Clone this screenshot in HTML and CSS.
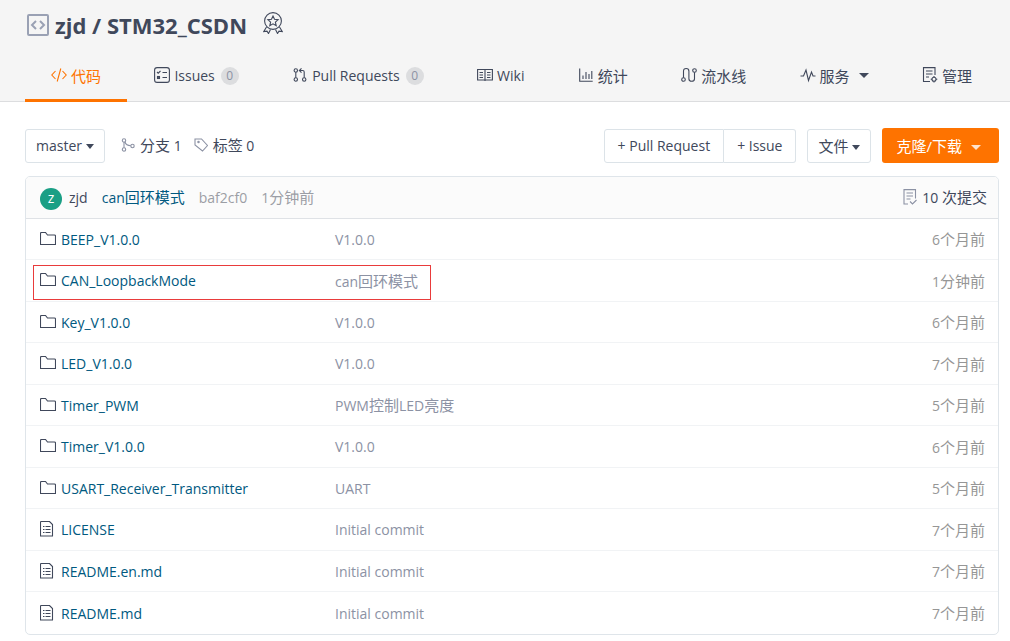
FILE: index.html
```html
<!DOCTYPE html>
<html lang="zh-CN">
<head>
<meta charset="utf-8">
<title>zjd/STM32_CSDN</title>
<link rel="stylesheet" href="styles.css">
</head>
<body>
<svg class="defs" aria-hidden="true">
  <symbol id="folder" viewBox="0 0 16 14"><path d="M.5 12.5V1.5q0-1 1-1H5.500l2 2.500H14.500q1 0 1 1v8.500z"/></symbol>
  <symbol id="file" viewBox="0 0 14 16"><path d="M1 .5h8.500L12.500 3.500v11.500h-12V1zM5.500 5.500h5M5.500 8.500h5M5.500 11.500h5M3 5.500h1.500M3 8.500h1.500M3 11.500h1.500"/></symbol>
</svg>
<header class="header">
  <div class="title-row">
    <svg class="icon repo-icon" viewBox="0 0 22 22"><rect x="1" y="1" width="20" height="20" rx="1"/><path d="M9 7l-4 4 4 4M13 7l4 4-4 4"/></svg>
    <h1 class="title"><a href="#">zjd</a> / <a href="#">STM32_CSDN</a></h1>
    <svg class="icon medal" viewBox="0 0 20 22"><circle cx="10" cy="9" r="8.400"/><path d="M10 4l1.500 3.300 3.600.4-2.700 2.400.8 3.600-3.200-1.900-3.200 1.900.8-3.600L4.900 7.700l3.600-.4zM3.500 15L.8 19.500l3.200-.4 1.500 2.400 2-4M16.500 15l2.700 4.500-3.200-.4-1.500 2.400-2-4"/></svg>
  </div>
  <nav class="tabs">
    <a class="tab active" href="#"><svg class="icon" viewBox="0 0 16 16"><path d="M4.500 4L.8 8l3.700 4M11.500 4l3.700 4-3.700 4M9.800 1.500l-3.600 13"/></svg><span class="cjk">代码</span></a>
    <a class="tab" href="#"><svg class="icon" viewBox="0 0 16 16"><rect x=".6" y=".6" width="14.800" height="14.800" rx="2.500"/><path d="M3 5l1.200 1.200L6.500 4M8.500 5.500h4.500M8.500 10.500h4.500"/><rect x="3.500" y="9.500" width="2" height="2"/></svg>Issues<span class="count">0</span></a>
    <a class="tab" href="#"><svg class="icon" viewBox="0 0 14 16"><circle cx="2.800" cy="3.500" r="1.700"/><circle cx="2.800" cy="12.500" r="1.700"/><circle cx="11.200" cy="12.500" r="1.700"/><path d="M2.800 5.200v5.600M6.500 3.500h3.200q1.500 0 1.500 1.500v5.800M8.500 1.300L6.300 3.500l2.200 2.200"/></svg>Pull Requests<span class="count">0</span></a>
    <a class="tab" href="#"><svg class="icon" viewBox="0 0 16 16"><path d="M.6 2.500h14.800v10.500H.6zM8 2.500V14M2.500 5.500H6M2.500 8H6M2.500 10.500H6M10 5.500h3.500M10 8h3.500M10 10.500h3.500"/></svg>Wiki</a>
    <a class="tab" href="#"><svg class="icon" viewBox="0 0 14 16"><path d="M.7 1.500v12.800h13M4 12V8.500M7 12V5M10 12V7M12.800 12V4"/></svg><span class="cjk">统计</span></a>
    <a class="tab" href="#"><svg class="icon" viewBox="0 0 16 16"><circle cx="2.500" cy="12.500" r="1.800"/><circle cx="13.500" cy="3.500" r="1.800"/><path d="M2.500 10.700V4.200q0-2.700 2.700-2.700t2.700 2.700v7.500q0 2.600 2.800 2.600t2.800-2.600V5.300"/></svg><span class="cjk">流水线</span></a>
    <a class="tab" href="#"><svg class="icon" viewBox="0 0 16 16"><path d="M.5 9h3L6 3l2.500 10.500L11.500 5l1.500 4h2.500"/></svg><span class="cjk">服务</span><i class="caret wide"></i></a>
    <a class="tab" href="#"><svg class="icon" viewBox="0 0 15 16"><path d="M7.500 14.500H1V.6h11.500V8M3.500 4H10M3.500 7H10M3.500 10h3"/><circle cx="11.500" cy="12.300" r="2"/><path d="M11.500 9v1.300M11.500 14.300v1.300M8.200 12.300h1.300M13.500 12.300h1.300"/></svg><span class="cjk">管理</span></a>
  </nav>
</header>
<main class="content">
  <div class="toolbar">
    <button class="btn">master<i class="caret"></i></button>
    <a class="stat branch" href="#"><svg class="icon muted" viewBox="0 0 14 16"><circle cx="3" cy="3.500" r="1.700"/><circle cx="3" cy="12.500" r="1.700"/><circle cx="11.500" cy="9" r="1.700"/><path d="M3 5.200v5.600M4 5Q5 8.500 9.800 8.800"/></svg><span><span class="cjk">分支</span> 1</span></a>
    <a class="stat" href="#"><svg class="icon muted" viewBox="0 0 14 16"><path d="M1 2h6.500l6 6.500-5 5.500L1 8z"/><circle cx="4.500" cy="5" r=".7"/></svg><span><span class="cjk">标签</span> 0</span></a>
    <div class="actions">
      <div class="group"><button class="btn">+ Pull Request</button><button class="btn">+ Issue</button></div>
      <button class="btn cjk">文件<i class="caret"></i></button>
      <button class="btn primary cjk">克隆/下载<i class="caret wide"></i></button>
    </div>
  </div>
  <section class="panel">
    <div class="commit">
      <span class="avatar">z</span>
      <a class="author" href="#">zjd</a>
      <a class="link message" href="#">can<span class="cjk">回环模式</span></a>
      <a class="hash" href="#">baf2cf0</a>
      <span class="when">1<span class="cjk">分钟前</span></span>
      <a class="commits" href="#"><svg class="icon muted" viewBox="0 0 14 16"><path d="M5 15H1V.6h11.500v9M3.500 4H10M3.500 7H10M3.500 10h4M7 12.500l2.500 2.500 4-4"/></svg><span>10 <span class="cjk">次提交</span></span></a>
    </div>
    <table class="files">
      <tr><td><a class="link" href="#"><svg class="icon folder"><use href="#folder"/></svg>BEEP_V1.0.0</a></td><td>V1.0.0</td><td>6<span class="cjk">个月前</span></td></tr>
      <tr class="marked"><td><a class="link" href="#"><svg class="icon folder"><use href="#folder"/></svg>CAN_LoopbackMode</a></td><td>can<span class="cjk">回环模式</span></td><td>1<span class="cjk">分钟前</span></td></tr>
      <tr><td><a class="link" href="#"><svg class="icon folder"><use href="#folder"/></svg>Key_V1.0.0</a></td><td>V1.0.0</td><td>6<span class="cjk">个月前</span></td></tr>
      <tr><td><a class="link" href="#"><svg class="icon folder"><use href="#folder"/></svg>LED_V1.0.0</a></td><td>V1.0.0</td><td>7<span class="cjk">个月前</span></td></tr>
      <tr><td><a class="link" href="#"><svg class="icon folder"><use href="#folder"/></svg>Timer_PWM</a></td><td>PWM<span class="cjk">控制</span>LED<span class="cjk">亮度</span></td><td>5<span class="cjk">个月前</span></td></tr>
      <tr><td><a class="link" href="#"><svg class="icon folder"><use href="#folder"/></svg>Timer_V1.0.0</a></td><td>V1.0.0</td><td>6<span class="cjk">个月前</span></td></tr>
      <tr><td><a class="link" href="#"><svg class="icon folder"><use href="#folder"/></svg>USART_Receiver_Transmitter</a></td><td>UART</td><td>5<span class="cjk">个月前</span></td></tr>
      <tr><td><a class="link" href="#"><svg class="icon file"><use href="#file"/></svg>LICENSE</a></td><td>Initial commit</td><td>7<span class="cjk">个月前</span></td></tr>
      <tr><td><a class="link" href="#"><svg class="icon file"><use href="#file"/></svg>README.en.md</a></td><td>Initial commit</td><td>7<span class="cjk">个月前</span></td></tr>
      <tr><td><a class="link" href="#"><svg class="icon file"><use href="#file"/></svg>README.md</a></td><td>Initial commit</td><td>7<span class="cjk">个月前</span></td></tr>
    </table>
  </section>
</main>
</body>
</html>
```
FILE: styles.css
```css
*, *::after { box-sizing: border-box; }
body {
  margin: 0;
  background: #fff;
  color: #40485b;
  font: 14px/20px "Open Sans", "Noto Sans CJK SC", sans-serif;
}
a { color: inherit; text-decoration: none; }
button { font: inherit; color: inherit; cursor: pointer; }
.cjk { font-size: 15px; }
.defs { display: none; }
.icon {
  width: 16px;
  height: 16px;
  flex: none;
  fill: none;
  stroke: #40485b;
  stroke-width: 1.1;
}
.icon.muted { width: 14px; stroke: #8c92a4; }

.header {
  padding: 0 12px 0 25px;
  background: #f5f5f5;
  border-bottom: 1px solid #dcdddf;
}
.title-row {
  display: flex;
  align-items: center;
  height: 50px;
  padding-left: 2px;
}
.repo-icon { width: 22px; height: 22px; stroke: #9aa1b4; stroke-width: 2; }
.title { margin: 0 16px 0 6px; font-size: 22px; line-height: 30px; font-weight: 700; }
.medal { width: 20px; height: 22px; margin-bottom: 4px; }
.tabs { display: flex; justify-content: space-between; margin-bottom: -1px; }
.tab {
  display: flex;
  align-items: center;
  gap: 4px;
  height: 52px;
  padding: 2px 26px 0;
  border-bottom: 3px solid transparent;
  white-space: nowrap;
}
.tab.active { color: #fe7300; border-color: #fe7300; }
.tab.active .icon { stroke: #fe7300; }
.tab .icon { margin-bottom: 2px; }
.count {
  width: 18px;
  height: 18px;
  margin-left: 2px;
  border-radius: 9px;
  background: #dcdddf;
  color: #8c92a4;
  font-size: 12px;
  line-height: 18px;
  text-align: center;
}
.caret {
  display: inline-block;
  margin-left: 4px;
  border: 4px solid transparent;
  border-top: 5px solid currentColor;
  border-bottom: 0;
  vertical-align: middle;
}
.caret.wide { margin-left: 5px; border-width: 5px 5px 0; }

.content { padding: 26px 11px 7px 25px; }
.toolbar { display: flex; align-items: center; height: 35px; }
.btn {
  height: 34px;
  padding: 0 10px;
  border: 1px solid #dce3e8;
  border-radius: 3px;
  background: #fff;
  white-space: nowrap;
}
.stat { display: flex; align-items: center; gap: 5px; margin-left: 12px; }
.stat.branch { margin-left: 16px; }
.stat .icon { margin-bottom: 2px; }
.actions { display: flex; align-items: center; gap: 11px; margin-left: auto; }
.group { display: flex; }
.group .btn { padding: 0 13px; }
.group .btn:first-child { border-radius: 3px 0 0 3px; }
.group .btn:last-child { border-left: 0; border-radius: 0 3px 3px 0; }
.btn.primary { height: 35px; padding: 0 18px 0 14px; border: 0; background: #fe7300; color: #fff; }
.primary .caret { margin-left: 9px; opacity: .8; }

.panel { margin-top: 13px; border: 1px solid #dfe5ea; border-radius: 5px; overflow: hidden; }
.commit {
  display: flex;
  align-items: center;
  height: 42px;
  padding: 0 11px 0 14px;
  border-bottom: 1px solid #dfe2e6;
  background: #fbfbfb;
}
.avatar {
  width: 22px;
  height: 22px;
  margin: 2px 7px 0 0;
  border-radius: 50%;
  background: #1a9f85;
  color: #fff;
  text-align: center;
}
.link { color: #005980; }
.message { margin: 0 14px; }
.hash { margin-right: 14px; }
.hash, .when { color: #9b9ea5; }
.commits { display: flex; align-items: center; gap: 5px; margin-left: auto; }
.commits .icon { margin-bottom: 2px; }

.files { width: 100%; border-collapse: separate; border-spacing: 0; table-layout: fixed; }
.files tr { height: 41px; }
.files tr:nth-child(even) { height: 42px; }
.files td { padding: 1px 0 0; border-bottom: 1px solid #f1f3f5; color: #8c92a4; white-space: nowrap; }
.files tr:last-child td { border-bottom: 0; }
.files td:first-child { width: 309px; padding-left: 14px; }
.files td:last-child { width: 120px; padding-right: 13px; text-align: right; color: #969696; }
.files .link { display: flex; align-items: center; }
.folder { height: 14px; margin: 0 5px 2px 0; }
.file { width: 14px; margin: 0 7px 2px 0; }
.marked td:first-child { position: relative; }
.marked td:first-child::after {
  content: "";
  position: absolute;
  left: 7px;
  top: 5px;
  width: 398px;
  height: 35px;
  border: 1px solid #e93b3b;
}
```
